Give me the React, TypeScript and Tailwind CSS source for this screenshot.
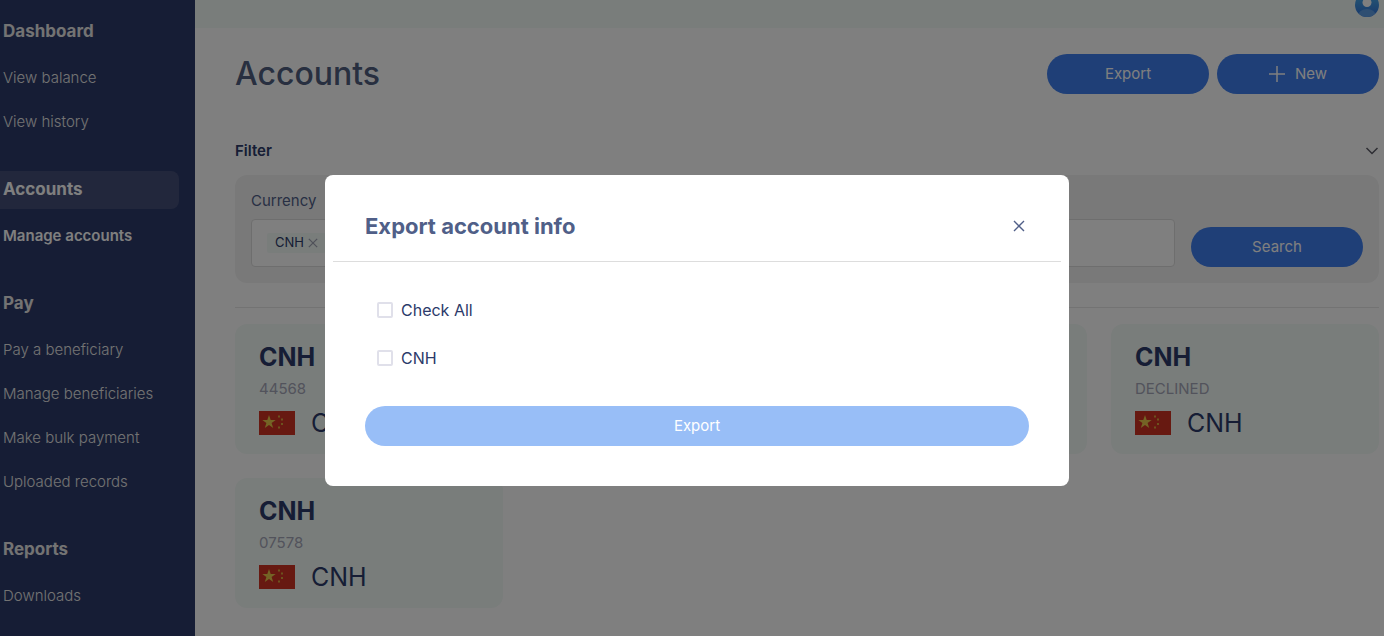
import React, {useState} from 'react';

type NavGroup = {
    title: string;
    active?: boolean;
    items: { label: string; current?: boolean }[];
};

const navigation: NavGroup[] = [
    {title: 'Dashboard', items: [{label: 'View balance'}, {label: 'View history'}]},
    {title: 'Accounts', active: true, items: [{label: 'Manage accounts', current: true}]},
    {
        title: 'Pay',
        items: [
            {label: 'Pay a beneficiary'},
            {label: 'Manage beneficiaries'},
            {label: 'Make bulk payment'},
            {label: 'Uploaded records'},
        ],
    },
    {title: 'Reports', items: [{label: 'Downloads'}]},
];

const accounts = [
    {id: 1, name: 'CNH', detail: '44568', currency: 'CNH'},
    {id: 2, name: 'CNH', detail: '', currency: 'CNH'},
    {id: 3, name: 'CNH', detail: '', currency: 'CNH'},
    {id: 4, name: 'CNH', detail: 'DECLINED', currency: 'CNH'},
    {id: 5, name: 'CNH', detail: '07578', currency: 'CNH'},
];

const Cross = ({className}: { className: string }) => (
    <svg viewBox="0 0 12 12" className={className} fill="none" stroke="currentColor" aria-hidden="true">
        <path d="M1 1l10 10M11 1L1 11" />
    </svg>
);

const ChinaFlag = () => (
    <svg viewBox="0 0 36 24" className="h-6 w-9" role="img" aria-label="China">
        <path fill="#cf3222" d="M0 0h36v24H0z" />
        <path
            fill="#e8c84a"
            d="M10 4l1.700 5h5l-4.100 3 1.600 5-4.200-3.100L5.800 17l1.600-5-4.100-3h5z"
        />
        <path
            fill="#d9a63c"
            d="M19 4.500h2v2h-2zM22 7.500h2v2h-2zM22 12h2v2h-2zM19 15.500h2v2h-2z"
        />
    </svg>
);

const Sidebar = () => (
    <nav className="flex w-[195px] shrink-0 flex-col gap-[27px] bg-[#2c3a6a] pt-[13px] pb-4">
        {navigation.map((group) => (
            <div key={group.title}>
                <h2
                    className={
                        group.active
                            ? 'mr-4 mb-[5px] flex h-[38px] items-center rounded-r-lg bg-[#454f79] pl-[3px] text-[17px] font-bold text-white'
                            : 'mr-4 mb-[5px] flex h-[38px] items-center pl-[3px] text-[17px] font-bold text-[#e6e6e6]'
                    }
                >
                    {group.title}
                </h2>
                {group.items.map((item) => (
                    <a
                        key={item.label}
                        href="#"
                        className={
                            item.current
                                ? 'flex h-11 items-center pl-[3px] text-[15px] font-semibold text-white'
                                : 'flex h-11 items-center pl-[3px] text-[15px] font-light text-[#e6e6e6]'
                        }
                    >
                        {item.label}
                    </a>
                ))}
            </div>
        ))}
    </nav>
);

const TopBar = () => (
    <header className="flex h-7 items-start justify-end bg-[#f3faf7] pr-[5px]">
        <button type="button" aria-label="Profile">
            <svg viewBox="0 7 24 17" className="h-[17px] w-6">
                <defs>
                    <linearGradient id="avatar" x1="0" y1="0" x2="0" y2="1">
                        <stop offset="0" stopColor="#4fb4ea" />
                        <stop offset="1" stopColor="#2f6fd8" />
                    </linearGradient>
                    <clipPath id="avatar-clip">
                        <circle cx="12" cy="12" r="12" />
                    </clipPath>
                </defs>
                <circle cx="12" cy="12" r="12" fill="url(#avatar)" />
                <ellipse cx="12" cy="23" rx="9" ry="7" fill="#5f9fe4" clipPath="url(#avatar-clip)" />
                <circle cx="12" cy="9.500" r="4.500" fill="#ffffff" />
            </svg>
        </button>
    </header>
);

const AccountCard = ({account}: { account: typeof accounts[number] }) => (
    <li className="rounded-xl bg-[#f3faf7] px-6 pt-[17px] pb-[15px]">
        <h3 className="text-[25px] leading-8 font-bold text-[#2c3a6a]">{account.name}</h3>
        <p className="mt-1.5 h-5 text-[15px] leading-5 text-[#a4a6b8]">{account.detail}</p>
        <div className="mt-2 flex h-8 items-center gap-4">
            <ChinaFlag />
            <span className="text-[25px] leading-8 text-[#2c3a6a]">{account.currency}</span>
        </div>
    </li>
);

const Filter = () => (
    <section className="mt-[47px]">
        <div className="flex h-5 items-center justify-between">
            <h2 className="text-[15px] font-semibold text-[#2c3a6a]">Filter</h2>
            <button type="button" aria-label="Toggle filter" className="text-[#5c5c66]">
                <svg viewBox="0 0 14 8" className="h-2 w-3.5" fill="none" stroke="currentColor" strokeWidth="1.5">
                    <path d="M1.500 1L7 6.500L12.500 1" />
                </svg>
            </button>
        </div>
        <form className="mt-3.5 flex items-end gap-4 rounded-xl bg-[#f3f3f3] p-4">
            <div className="grow">
                <label htmlFor="currency" className="block text-[15px] leading-5 text-[#505f88]">Currency</label>
                <div className="mt-2 flex h-12 items-center rounded border border-[#dcdcdc] bg-white px-[15px]">
                    <span className="flex h-5 items-center gap-1 rounded-xs bg-[#f3faf7] px-2 text-[13px] text-[#2c3a6a]">
                        CNH
                        <button type="button" aria-label="Remove CNH" className="text-[#a0a4b4]">
                            <Cross className="h-2.5 w-2.5 stroke-[1.5]" />
                        </button>
                    </span>
                    <input id="currency" type="text" className="min-w-0 grow bg-transparent outline-none" />
                </div>
            </div>
            <button type="button" className="h-10 w-[172px] rounded-full bg-[#3e7eee] text-[15px] text-white">
                Search
            </button>
        </form>
    </section>
);

const ExportModal = ({onClose}: { onClose: () => void }) => {

    const [selected, setSelected] = useState<string[]>([])

    const toggle = (name: string) => {
        setSelected(selected.includes(name) ? selected.filter((s) => s !== name) : [...selected, name])
    }

    return (
        <div className="fixed inset-0 flex items-start justify-center bg-black/50 pt-[175px] pl-2.5">
            <div role="dialog" aria-labelledby="export-title" className="w-full max-w-[744px] rounded-lg bg-white">
                <div className="mx-2 flex h-[87px] items-center justify-between border-b border-[#dddddd] px-8 pt-4">
                    <h2 id="export-title" className="text-[22px] font-bold text-[#505f88]">Export account info</h2>
                    <button
                        type="button"
                        aria-label="Close"
                        onClick={onClose}
                        className="flex h-5 w-5 items-center justify-center text-[#505f88]"
                    >
                        <Cross className="h-3 w-3 stroke-[1.4]" />
                    </button>
                </div>
                <form className="px-10 pt-6 pb-10">
                    {['Check All', 'CNH'].map((name) => (
                        <label key={name} className="flex h-12 items-center gap-2 pl-3 text-base text-[#2c3a6a]">
                            <input
                                type="checkbox"
                                checked={selected.includes(name)}
                                onChange={() => toggle(name)}
                                className="h-4 w-4 appearance-none rounded-xs border-2 border-[#e0e0ea] checked:bg-[#3e7eee]"
                            />
                            {name}
                        </label>
                    ))}
                    <button type="button" className="mt-6 block h-10 w-full rounded-full bg-[#98bef7] text-[15px] text-white">
                        Export
                    </button>
                </form>
            </div>
        </div>
    );
};

const App = () => {

    const [exporting, setExporting] = useState(true)

    return (
        <div className="flex min-h-screen bg-white font-['Inter',sans-serif]">
            <Sidebar />
            <div className="min-w-0 grow">
                <TopBar />
                <main className="pt-[26px] pr-[5px] pb-7 pl-10">
                    <div className="flex h-10 items-center justify-between">
                        <h1 className="text-[32px] font-medium text-[#505f80]">Accounts</h1>
                        <div className="flex gap-2">
                            <button
                                type="button"
                                onClick={() => setExporting(true)}
                                className="h-10 w-[162px] rounded-full bg-[#3e7eee] text-[15px] text-white"
                            >
                                Export
                            </button>
                            <button
                                type="button"
                                className="flex h-10 w-[162px] items-center justify-center gap-2.5 rounded-full bg-[#3e7eee] text-[15px] text-white"
                            >
                                <svg viewBox="0 0 16 16" className="h-4 w-4" fill="none" stroke="currentColor" strokeWidth="1.5">
                                    <path d="M8 0v16M0 8h16" />
                                </svg>
                                New
                            </button>
                        </div>
                    </div>
                    <Filter />
                    <hr className="mt-6 border-[#e6e6e6]" />
                    <ul className="mt-4 grid grid-cols-4 gap-6">
                        {accounts.map((account) => (
                            <AccountCard key={account.id} account={account} />
                        ))}
                    </ul>
                </main>
            </div>
            {exporting && <ExportModal onClose={() => setExporting(false)} />}
        </div>
    );
};

export default App;
